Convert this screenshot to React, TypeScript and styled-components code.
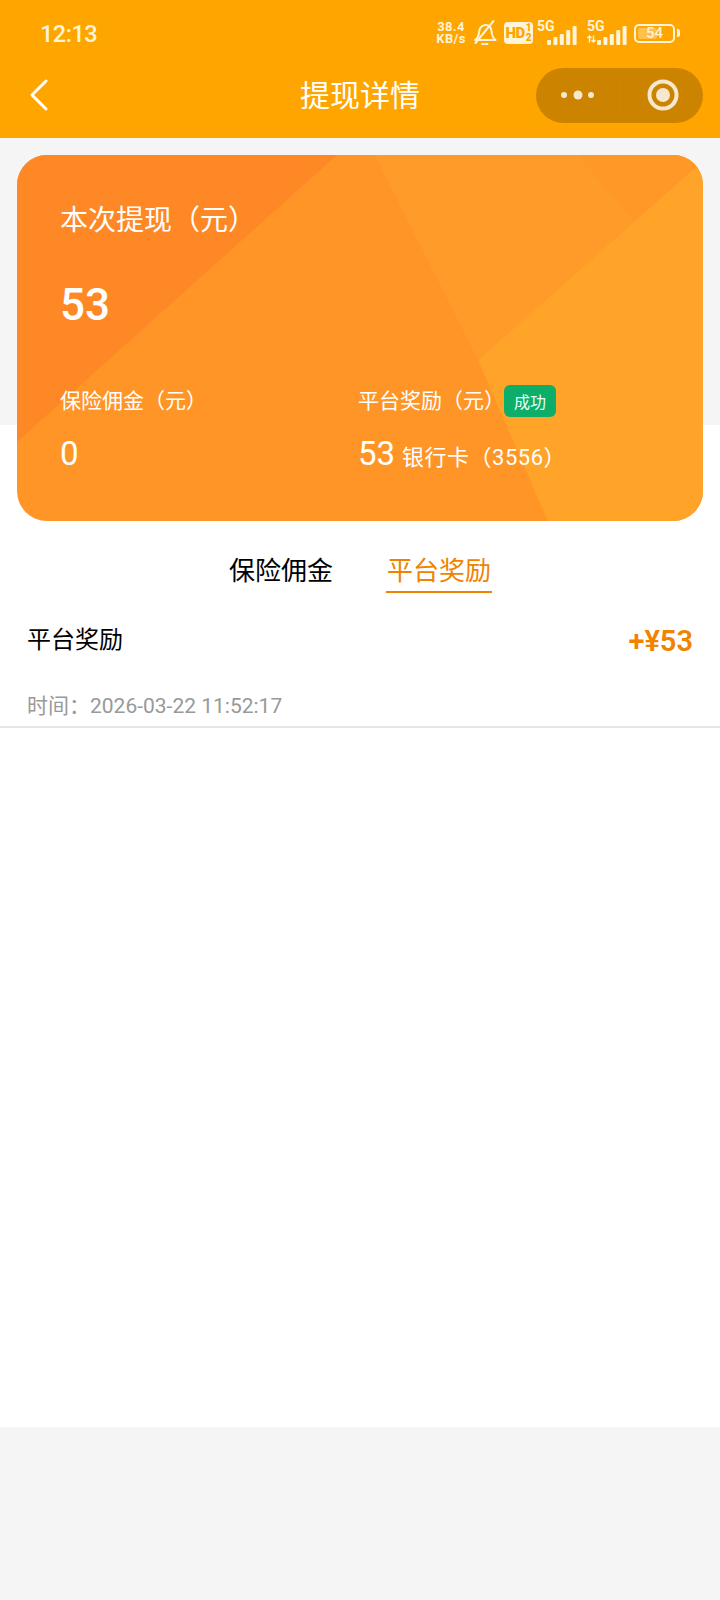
import styled, { createGlobalStyle } from "styled-components";

const GlobalStyle = createGlobalStyle`
	html, body {
		margin: 0;
		padding: 0;
		background-color: #f5f5f5;
	}
	* {
		box-sizing: border-box;
	}
	body {
		font-family: Roboto, "Noto Sans CJK SC", sans-serif;
	}
`

function SignalBars() {
	const heights = [5, 8, 11, 15, 19]
	return (
		<svg width="30" height="19" viewBox="0 0 30 19" fill="#fff3d9">
			{heights.map((h, i) => (
				<rect key={i} x={i * 6.4} y={19 - h} width="4" height={h} rx="1" />
			))}
		</svg>
	)
}

function Signal(props: { arrows?: boolean }) {
	return (
		<SignalWrap>
			<FiveG>5G</FiveG>
			{props.arrows ? (
				<Arrows width="9" height="8" viewBox="0 0 9 8" stroke="#fff3d9" strokeWidth="1.4" fill="none">
					<path d="M2.5 7.5V1M.5 3l2-2 2 2" />
					<path d="M6.5 .5V7M4.5 5l2 2 2-2" />
				</Arrows>
			) : null}
			<BarSlot>
				<SignalBars />
			</BarSlot>
		</SignalWrap>
	)
}

function StatusBar() {
	return (
		<StyledStatusBar>
			<Clock>12:13</Clock>
			<StatusIcons>
				<Speed>
					<span>38.4</span>
					<span>KB/s</span>
				</Speed>
				<svg width="24" height="26" viewBox="0 0 24 26" fill="none" stroke="#fff3d9" strokeWidth="2" strokeLinecap="round" strokeLinejoin="round">
					<path d="M2 20c2.500-1.500 3.500-3.500 3.800-6.500C6.200 9 8 5.500 12 5c4-.3 6.300 2.500 6.600 6.500.2 3.500 1.200 6.500 4 8.500z" />
					<path d="M9 24h5.500" />
					<path d="M2.500 23 20.500 1" />
				</svg>
				<HdBadge>
					<HdText>HD</HdText>
					<HdSims>
						<span>1</span>
						<span>2</span>
					</HdSims>
				</HdBadge>
				<Signal />
				<Signal arrows />
				<Battery>
					<BatteryBody>
						<BatteryFill />
						<BatteryLevel>54</BatteryLevel>
					</BatteryBody>
					<BatteryNub />
				</Battery>
			</StatusIcons>
		</StyledStatusBar>
	)
}

function NavBar() {
	return (
		<StyledNavBar>
			<BackSlot>
				<svg width="20" height="32" viewBox="0 0 20 32" fill="none" stroke="#fff" strokeWidth="3" strokeLinecap="round" strokeLinejoin="round">
					<path d="M17 2 3 16l14 14" />
				</svg>
			</BackSlot>
			<Title>提现详情</Title>
			<CapsuleSlot>
				<Capsule>
					<CapsuleHalf>
						<svg width="36" height="10" viewBox="0 0 36 10" fill="#f6e8cf">
							<circle cx="4" cy="5" r="3" />
							<circle cx="18" cy="5" r="4.500" />
							<circle cx="31" cy="5" r="3" />
						</svg>
					</CapsuleHalf>
					<CapsuleDivider />
					<CapsuleHalf>
						<ScanIcon width="32" height="32" viewBox="0 0 32 32" fill="none">
							<circle cx="16" cy="16" r="13.500" stroke="#f6e8cf" strokeWidth="4" />
							<circle cx="16" cy="16" r="7" fill="#f6e8cf" />
						</ScanIcon>
					</CapsuleHalf>
				</Capsule>
			</CapsuleSlot>
		</StyledNavBar>
	)
}

function Facets() {
	return (
		<FacetArt viewBox="0 0 686 366" preserveAspectRatio="none">
			<rect width="686" height="366" fill="#ff9527" />
			<polygon points="0,0 320,0 0,287" fill="#ff8826" />
			<polygon points="358,0 686,0 686,6 461,205" fill="#ff9b29" />
			<polygon points="560,0 686,0 686,13 620,70" fill="#ff9827" />
			<polygon points="461,205 686,6 686,366 531,366" fill="#ffa429" />
		</FacetArt>
	)
}

export default function App() {
	return (
		<>
			<GlobalStyle />
			<Page>
				<Header>
					<StatusBar />
					<NavBar />
				</Header>
				<HeroBand>
					<Card>
						<Facets />
						<CardContent>
							<CardTitle>本次提现（元）</CardTitle>
							<CardAmount>53</CardAmount>
							<CardColumns>
								<div>
									<ColumnLabelRow>
										<ColumnLabel>保险佣金（元）</ColumnLabel>
									</ColumnLabelRow>
									<ColumnValueRow>
										<ColumnValue>0</ColumnValue>
									</ColumnValueRow>
								</div>
								<div>
									<ColumnLabelRow>
										<ColumnLabel>平台奖励（元）</ColumnLabel>
										<StatusBadge>成功</StatusBadge>
									</ColumnLabelRow>
									<ColumnValueRow>
										<ColumnValue>53</ColumnValue>
										<BankText>银行卡（3556）</BankText>
									</ColumnValueRow>
								</div>
							</CardColumns>
						</CardContent>
					</Card>
				</HeroBand>
				<Body>
					<Tabs>
						<Tab>保险佣金</Tab>
						<Tab active>平台奖励</Tab>
					</Tabs>
					<Record>
						<RecordTop>
							<RecordName>平台奖励</RecordName>
							<RecordAmount>+¥53</RecordAmount>
						</RecordTop>
						<RecordTime>时间：2026-03-22 11:52:17</RecordTime>
					</Record>
				</Body>
			</Page>
		</>
	)
}

const Page = styled.div`
	width: 720px;
	min-height: 1600px;
	background-color: #f5f5f5;
`

const Header = styled.header`
	height: 138px;
	background-color: #ffa500;
`

const StyledStatusBar = styled.div`
	display: flex;
	justify-content: space-between;
	align-items: center;
	height: 66px;
	padding: 0 40px;
`

const Clock = styled.span`
	color: #fff3d9;
	font-size: 23.5px;
	font-weight: 500;
	letter-spacing: -0.5px;
	padding-top: 2px;
`

const StatusIcons = styled.div`
	display: flex;
	align-items: center;
	gap: 7px;
`

const Speed = styled.div`
	display: flex;
	flex-direction: column;
	align-items: center;
	width: 30px;
	color: #fff3d9;
	font-size: 13px;
	font-weight: 700;
	line-height: 12px;
	letter-spacing: 0.3px;
`

const HdBadge = styled.div`
	display: flex;
	align-items: center;
	justify-content: center;
	gap: 1px;
	width: 29px;
	height: 22px;
	border-radius: 4px;
	background-color: #fff3d9;
	color: #ffa500;
`

const HdText = styled.span`
	font-size: 15px;
	font-weight: 900;
	letter-spacing: -0.5px;
`

const HdSims = styled.div`
	display: flex;
	flex-direction: column;
	font-size: 10px;
	font-weight: 900;
	line-height: 10px;
`

const SignalWrap = styled.div`
	position: relative;
	width: 40px;
	height: 24px;
	margin-left: -3px;

	& + & {
		margin-left: 3px;
	}
`

const FiveG = styled.span`
	position: absolute;
	left: 0;
	top: 0;
	color: #fff3d9;
	font-size: 14px;
	font-weight: 700;
	line-height: 11px;
`

const Arrows = styled.svg`
	position: absolute;
	left: 0;
	top: 14px;
`

const BarSlot = styled.div`
	position: absolute;
	right: 0;
	bottom: 0;
	display: flex;
`

const Battery = styled.div`
	display: flex;
	align-items: center;
	gap: 2px;
`

const BatteryBody = styled.div`
	position: relative;
	display: flex;
	align-items: center;
	justify-content: center;
	width: 41px;
	height: 19px;
	border: 2px solid #fff3d9;
	border-radius: 5px;
`

const BatteryFill = styled.div`
	position: absolute;
	left: 2px;
	top: 2px;
	bottom: 2px;
	width: 19px;
	border-radius: 2px;
	background-color: rgba(255, 243, 217, 0.35);
`

const BatteryLevel = styled.span`
	position: relative;
	color: #fff3d9;
	font-size: 15px;
	font-weight: 500;
	line-height: 15px;
`

const BatteryNub = styled.div`
	width: 3px;
	height: 8px;
	border-radius: 0 2px 2px 0;
	background-color: #fff3d9;
`

const StyledNavBar = styled.div`
	display: grid;
	grid-template-columns: 1fr auto 1fr;
	align-items: center;
	height: 58px;
	padding: 0 17px 0 29px;
`

const BackSlot = styled.div`
	display: flex;
	align-items: center;
`

const Title = styled.h1`
	margin: -4px 12px 0 0;
	color: #fff;
	font-size: 30px;
	font-weight: 400;
`

const CapsuleSlot = styled.div`
	display: flex;
	justify-content: flex-end;
`

const Capsule = styled.div`
	display: flex;
	align-items: center;
	width: 167px;
	height: 55px;
	border-radius: 28px;
	background-color: rgba(0, 0, 0, 0.2);
`

const CapsuleHalf = styled.div`
	display: flex;
	flex: 1;
	align-items: center;
	justify-content: center;
`

const ScanIcon = styled.svg`
	margin-left: 2px;
`

const CapsuleDivider = styled.div`
	width: 1px;
	height: 38px;
	background-color: rgba(255, 255, 255, 0.03);
`

const HeroBand = styled.section`
	height: 287px;
	padding: 17px 17px 0;
	background-color: #f5f5f5;
`

const Card = styled.div`
	position: relative;
	width: 686px;
	height: 366px;
	border-radius: 30px;
	overflow: hidden;
`

const FacetArt = styled.svg`
	position: absolute;
	inset: 0;
	width: 100%;
	height: 100%;
`

const CardContent = styled.div`
	position: relative;
	display: flex;
	flex-direction: column;
	height: 100%;
	padding: 46px 0 0 43px;
	color: #fff;
`

const CardTitle = styled.div`
	font-size: 28px;
	line-height: 40px;
`

const CardAmount = styled.div`
	margin-top: 38px;
	font-size: 44px;
	font-weight: 500;
	line-height: 52px;
`

const CardColumns = styled.div`
	display: grid;
	grid-template-columns: 298px 1fr;
	margin-top: 54px;
`

const ColumnLabelRow = styled.div`
	display: flex;
	align-items: center;
	height: 32px;
`

const ColumnLabel = styled.span`
	font-size: 21px;
	line-height: 32px;
`

const StatusBadge = styled.span`
	display: flex;
	align-items: center;
	justify-content: center;
	width: 52px;
	height: 32px;
	margin-left: -1px;
	border-radius: 6px;
	background-color: #0cae6a;
	color: #e9fff3;
	font-size: 16px;
`

const ColumnValueRow = styled.div`
	display: flex;
	align-items: baseline;
	gap: 7px;
	margin-top: 18px;
`

const ColumnValue = styled.span`
	font-size: 33px;
	line-height: 38px;
`

const BankText = styled.span`
	font-size: 22px;
	line-height: 38px;
	letter-spacing: 0.5px;
`

const Body = styled.main`
	height: 1002px;
	padding-top: 112px;
	background-color: #fff;
`

const Tabs = styled.div`
	display: flex;
	justify-content: center;
	gap: 52px;
`

const Tab = styled.div<{ active?: boolean }>`
	height: 56px;
	padding: 16px 1px 0;
	border-bottom: 2px solid ${(props) => (props.active ? "#f08300" : "transparent")};
	color: ${(props) => (props.active ? "#f08300" : "#000")};
	font-size: 26px;
	line-height: 36px;
`

const Record = styled.div`
	padding: 0 27px 6px;
	border-bottom: 2px solid #e6e6e6;
`

const RecordTop = styled.div`
	display: flex;
	justify-content: space-between;
	align-items: center;
	padding-top: 28px;
`

const RecordName = styled.span`
	color: #000;
	font-size: 24px;
	line-height: 34px;
`

const RecordAmount = styled.span`
	color: #f08300;
	font-size: 29px;
	font-weight: 600;
	line-height: 34px;
	margin-top: 3px;
`

const RecordTime = styled.div`
	margin-top: 34px;
	color: #999;
	font-size: 21px;
	line-height: 28px;
`
